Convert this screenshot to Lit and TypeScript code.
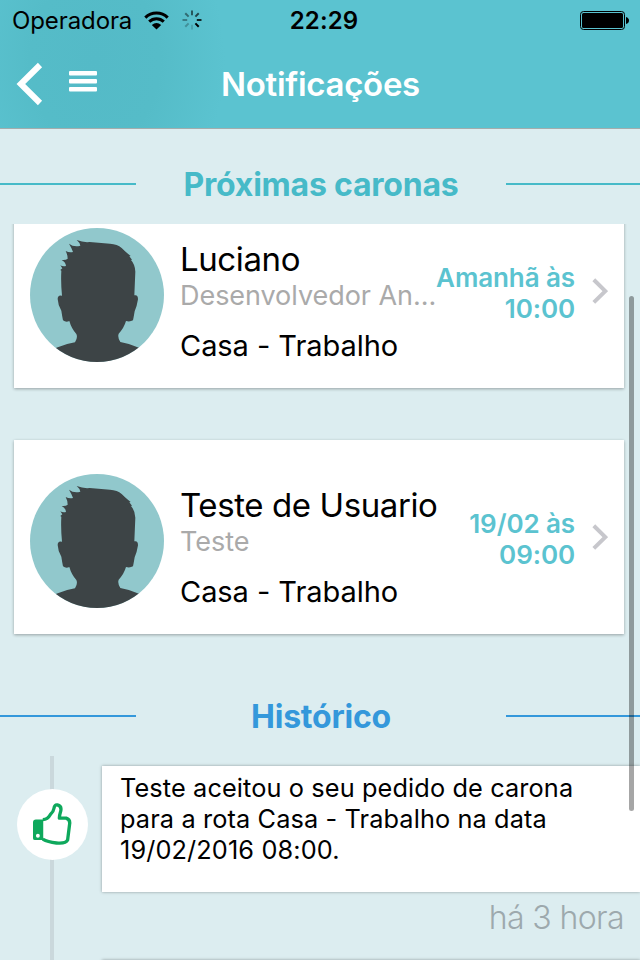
import { LitElement, html, css, svg } from "lit";
import { customElement, property } from "lit/decorators.js";

interface Ride {
  name: string;
  role: string;
  route: string;
  day: string;
  hour: string;
}

const rides: Ride[] = [
  { name: "Luciano", role: "Desenvolvedor An...", route: "Casa - Trabalho", day: "Amanhã às", hour: "10:00" },
  { name: "Teste de Usuario", role: "Teste", route: "Casa - Trabalho", day: "19/02 às", hour: "09:00" },
];

@customElement("status-bar")
class StatusBar extends LitElement {
  static styles = css`
    :host { display: grid; grid-template-columns: 1fr auto 1fr; height: 40px; align-items: center; color: #000; font-size: 24px; line-height: 40px; }
    .left { display: flex; align-items: center; padding-left: 12px; }
    .carrier { width: 120px; padding-top: 2px; line-height: 38px; letter-spacing: -0.1px; white-space: nowrap; }
    .wifi { margin-left: 12px; }
    .spin { margin-left: 13px; }
    .time { font-weight: 600; width: 70px; text-align: center; padding: 2px 0 0 8px; line-height: 38px; letter-spacing: 0.1px; white-space: nowrap; }
    .right { display: flex; justify-content: flex-end; padding-right: 11px; }
    svg { display: block; }
  `;
  render() {
    const shades = [0.55, 0.65, 0.8, 1, 0.15, 0.25, 0.35, 0.45];
    return html`
      <div class="left">
        <span class="carrier">Operadora</span>
        <svg class="wifi" width="25" height="19" viewBox="0 0 25 19">
          <g fill="none" stroke="#000" stroke-width="3">
            <path d="M1.3 6.6A16 16 0 0 1 23.7 6.6" />
            <path d="M5.2 10.6A10.5 10.5 0 0 1 19.8 10.6" />
          </g>
          <path d="M7.8 14Q12.500 10 17.200 14L12.500 18.600Z" />
        </svg>
        <svg class="spin" width="20" height="20" viewBox="-10 -10 20 20">
          ${shades.map((o, i) => svg`<path d="M0 -4.800V-9.500" stroke="#000" stroke-width="2" stroke-opacity=${o} transform="rotate(${i * 45})" />`)}
        </svg>
      </div>
      <span class="time">22:29</span>
      <div class="right">
        <svg width="49" height="19" viewBox="0 0 49 19">
          <rect x=".5" y=".5" width="44" height="18" rx="3" fill="none" stroke="#000" />
          <rect x="2" y="2" width="41" height="15" rx="1.500" />
          <path d="M46 6Q49 7 49 9.500T46 13Z" />
        </svg>
      </div>
    `;
  }
}

@customElement("section-title")
class SectionTitle extends LitElement {
  @property() label = "";
  static styles = css`
    :host { display: grid; grid-template-columns: 136px 1fr 134px; align-items: center; font-size: 32px; font-weight: 700; line-height: 40px; }
    .rule { height: 2px; background: currentColor; }
    .label { padding-top: 1px; line-height: 39px; letter-spacing: -0.22px; text-align: center; white-space: nowrap; }
  `;
  render() {
    return html`<div class="rule"></div><div class="label">${this.label}</div><div class="rule"></div>`;
  }
}

@customElement("ride-card")
class RideCard extends LitElement {
  @property({ attribute: false }) ride!: Ride;
  static styles = css`
    :host { display: flex; box-sizing: border-box; height: 194px; padding: 34px 16px 0; background: #fff; box-shadow: 0 1px 3px rgba(0, 0, 0, 0.32); }
    svg { display: block; flex: none; }
    .info { margin-left: 16px; width: 259px; flex: none; white-space: nowrap; }
    .name { font-size: 33px; line-height: 40px; margin-top: 11px; color: #000; letter-spacing: -0.4px; }
    .role { font-size: 27px; line-height: 34px; color: #aaa; letter-spacing: -0.05px; }
    .route { font-size: 29px; line-height: 36px; margin-top: 15px; color: #000; letter-spacing: -0.05px; }
    .when { flex: 1; margin-top: 34px; text-align: right; font-size: 26px; font-weight: 600; line-height: 31px; color: #5bc3d0; margin-left: -20px; white-space: nowrap; letter-spacing: -0.1px; }
    .arrow { margin: 50px 0 0 17px; }
  `;
  render() {
    const r = this.ride;
    return html`
      <svg width="134" height="134" viewBox="30 24 402 402">
        <defs><clipPath id="disc"><circle cx="231" cy="225" r="201" /></clipPath></defs>
        <circle cx="231" cy="225" r="201" fill="#91c8cc" />
        <path clip-path="url(#disc)" fill="#3d4446" d="M170 60Q190 68 209 66L270 71Q292 72 305 84Q315 94 322 100L332 108L328 109L336 119L333 120Q345 133 346 155L343 226Q354 223 354 238Q351 258 344 274Q341 292 339 301Q330 306 318 303Q312 324 296 341Q292 352 301 366Q330 371 357 383L400 450H70L109 383Q135 372 165 367Q174 353 169 342Q154 325 148 303Q138 308 129 301Q126 286 124 272Q114 256 113 237Q113 224 126 227Q122 188 124 152L121 150L127 145L121 136Q128 140 138 138Q137 126 125 120Q138 121 143 116Q143 104 137 93Q148 99 159 96Q155 84 147 71Q161 82 181 77Q179 67 170 60Z" />
      </svg>
      <div class="info">
        <div class="name">${r.name}</div>
        <div class="role">${r.role}</div>
        <div class="route">${r.route}</div>
      </div>
      <div class="when">${r.day}<br />${r.hour}</div>
      <svg class="arrow" width="16" height="27" viewBox="0 0 16 27"><path d="M1.800 1.800L13.300 13.100L1.800 24.400" fill="none" stroke="#c7c7cc" stroke-width="4" /></svg>
    `;
  }
}

@customElement("app-root")
class AppRoot extends LitElement {
  static styles = css`
    :host { display: block; position: relative; width: 640px; height: 960px; overflow: hidden; background: #dcedf0; font-family: Inter, "Liberation Sans", sans-serif; }
    .header { height: 128px; border-bottom: 1px solid #a3adad; background: radial-gradient(ellipse 130px 170px at 95px 60px, #54bac7 0%, #55bcc8 50%, rgba(91, 195, 208, 0) 100%), #5bc3d0; color: #fff; }
    .nav { display: grid; grid-template-columns: 221px 1fr; height: 88px; align-items: center; }
    .buttons { display: flex; align-items: center; padding-left: 16px; gap: 26px; }
    .buttons svg { display: block; }
    .menu { margin-top: -6px; }
    .title { font-size: 33px; font-weight: 600; line-height: 40px; letter-spacing: -0.3px; white-space: nowrap; }
    .next { color: #46bac8; margin-top: 35px; }
    .list { margin-top: 20px; padding: 0 16px 5px 14px; overflow: hidden; display: flex; flex-direction: column; gap: 52px; }
    .list ride-card:first-child { margin-top: -30px; }
    .past { color: #3498db; margin-top: 57px; }
    .timeline { display: grid; grid-template-columns: 102px 1fr; margin-top: 20px; height: 204px; }
    .rail { display: grid; justify-items: center; align-items: start; background: linear-gradient(#cad8dc, #cad8dc) 50px 0 / 4px 100% no-repeat; }
    .bubble { width: 71px; height: 71px; margin: 33px 0 0 3px; border-radius: 50%; background: #fff; display: grid; place-items: center; }
    .bubble svg { margin: 0 0 2px 0; }
    .events { padding-top: 10px; }
    .event { box-sizing: border-box; height: 126px; padding: 6px 0 0 18px; background: #fff; box-shadow: 0 0 3px rgba(0, 0, 0, 0.35); font-size: 25.300px; letter-spacing: 0.120px; line-height: 31px; color: #000; white-space: nowrap; }
    .ago { height: 68px; padding: 5px 16px 0 0; box-sizing: border-box; text-align: right; font-size: 32px; font-weight: 300; letter-spacing: -0.6px; line-height: 41px; color: #9da9ad; }
    .upcoming { height: 20px; background: #fff; box-shadow: 0 0 3px rgba(0, 0, 0, 0.35); }
    .scroll { position: absolute; left: 629px; top: 296px; width: 5px; height: 515px; border-radius: 3px; background: rgba(0, 0, 0, 0.35); }
  `;
  render() {
    return html`
      <div class="header">
        <status-bar></status-bar>
        <div class="nav">
          <div class="buttons">
            <svg width="27" height="44" viewBox="0 0 27 44"><path d="M24 3L4.800 22L24 41" fill="none" stroke="#fff" stroke-width="6" /></svg>
            <svg class="menu" width="28" height="21" viewBox="0 0 28 21" fill="#fff"><rect width="28" height="4.500" rx="1" /><rect y="8" width="28" height="4.500" rx="1" /><rect y="16" width="28" height="4.500" rx="1" /></svg>
          </div>
          <div class="title">Notificações</div>
        </div>
      </div>
      <section-title class="next" label="Próximas caronas"></section-title>
      <div class="list">${rides.map((r) => html`<ride-card .ride=${r}></ride-card>`)}</div>
      <section-title class="past" label="Histórico"></section-title>
      <div class="timeline">
        <div class="rail">
          <div class="bubble">
            <svg width="39" height="43" viewBox="0 0 40 44">
              <path d="M10 18Q15 18 18 12.500Q21 10 21.500 6.500Q22 2.500 25 3Q29.500 4 28.500 9Q27 14 27 16.500H34Q38.500 18 37.500 23L35.500 39Q33.500 43 24 42Q15 41 10 38" fill="none" stroke="#0ea85c" stroke-width="3.400" stroke-linejoin="round" />
              <path fill="#0ea85c" fill-rule="evenodd" d="M3 18H10.500V39H2Q0 39 0 37V21Q0 18 3 18ZM5 32.500A2 2 0 1 0 5 36.500A2 2 0 1 0 5 32.500Z" />
            </svg>
          </div>
        </div>
        <div class="events">
          <div class="event">Teste aceitou o seu pedido de carona<br />para a rota Casa - Trabalho na data<br />19/02/2016 08:00.</div>
          <div class="ago">há 3 hora</div>
          <div class="upcoming"></div>
        </div>
      </div>
      <div class="scroll"></div>
    `;
  }
}
